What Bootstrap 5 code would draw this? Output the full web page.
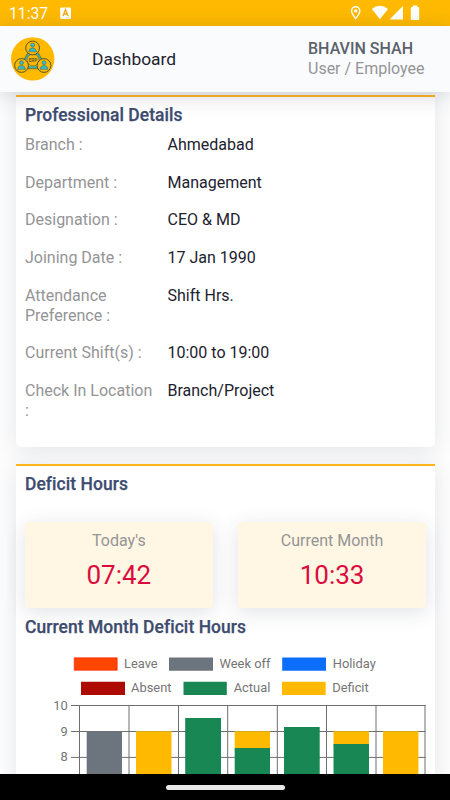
<!DOCTYPE html>
<html lang="en">
<head>
<meta charset="utf-8">
<meta name="viewport" content="width=device-width, initial-scale=1">
<title>Dashboard</title>
<link href="https://cdn.jsdelivr.net/npm/bootstrap@5.3.0/dist/css/bootstrap.min.css" rel="stylesheet">
<style>
body{font-family:Roboto,sans-serif;font-size:16px;line-height:20px;color:#1c222e;background:#fdfdfd;height:800px}
.screen{width:450px;height:800px}
.status{height:26px;background:#ffba00;padding:0 29px 0 9px}
.clock{font-size:15.7px;padding-top:2px;width:50px}
.topbar{height:66px;background:#fafbfd;box-shadow:0 3px 20px rgba(30,35,55,.2);z-index:2}
.logo{margin-left:11px}
.page-title{margin-left:37px;font-size:17.4px;margin-top:-1px}
.user-box{width:142px}
.user-name{color:#5a626b;font-weight:500;font-size:16.05px}
.soft{color:#949496}
.main-area{padding:2.5px 15.5px 0 16px}
.panel{border-radius:0 0 5px 5px;border-top:2px solid #ffb41c;background:#fff;box-shadow:0 3px 22px rgba(50,55,85,.12);padding:0 9px}
.panel-a{height:352px;margin-bottom:17.4px}
.panel-b{height:360px}
.heading{font-size:17.45px;font-weight:500;line-height:20px;color:#3d4b6f;letter-spacing:.07px;-webkit-text-stroke:.25px #3d4b6f;padding-top:8.5px}
.details{padding-top:10px}
.detail-row{margin-bottom:17.65px}
.detail-label{width:142.5px;padding-right:10px}
.tiles{margin-top:28px;gap:25.5px}
.tile{width:187.7px;height:86px;border-radius:4px;background:#fff7e3;box-shadow:0 4px 20px rgba(45,50,80,.14);padding-top:9px}
.tile-value{font-size:26px;line-height:32px;color:#dc0b3e;margin-top:8px}
.month-heading{padding-top:8.5px}
.chart{margin-top:13px}
.bottom-bar{height:26px;background:#000;z-index:3}
.pill{width:119px;height:5px;background:#e9e9e9}
</style>
<script src="https://cdn.jsdelivr.net/npm/bootstrap@5.3.0/dist/js/bootstrap.bundle.min.js"></script>
</head>
<body class="overflow-hidden">
<div class="screen d-flex flex-column overflow-hidden">
  <div class="status d-flex align-items-center text-white flex-shrink-0">
    <span class="clock">11:37</span>
    <svg width="14" height="26" viewBox="59 0 14 26">
      <rect x="60.200" y="7.500" width="10.800" height="11.500" rx="1.200" fill="#fff"/>
      <path d="M63 16l2.500-6.500L68 16M64 14h3.100" fill="none" stroke="#f3aa08" stroke-width="1.300"/>
      <path d="M66 17.700h3.500" stroke="#f9d88c" stroke-width=".7"/>
    </svg>
    <svg class="ms-auto" width="76" height="26" viewBox="345 0 76 26" fill="#fff">
      <path fill-rule="evenodd" d="M355.700 6a4.800 4.800 0 0 0-4.800 4.800c0 3.500 4.800 9 4.800 9s4.800-5.500 4.800-9a4.800 4.800 0 0 0-4.800-4.800zm0 1.400a3.400 3.400 0 0 1 3.400 3.400c0 2-2 5-3.400 6.700-1.400-1.700-3.400-4.700-3.400-6.700a3.400 3.400 0 0 1 3.400-3.400z"/>
      <circle cx="355.700" cy="10.900" r="1.700"/>
      <path d="M371.800 9q8-6.400 16.200 0l-8.100 10.300z"/>
      <path d="M403 6v13.600h-13.500z"/>
      <path d="M412.800 5.500h4.400V7h1q1 0 1 1v11q0 1-1 1h-6.400q-1 0-1-1V8q0-1 1-1h1z"/>
    </svg>
  </div>
  <header class="topbar d-flex align-items-center position-relative flex-shrink-0">
    <svg class="logo" width="44" height="44" viewBox="0 0 44 44">
      <circle cx="21.700" cy="21.900" r="21.700" fill="#ffba00"/>
      <path d="M17.500 17h9l4.200 7.200-4.200 6h-9l-4.200-6z" fill="none" stroke="#35b5b0" stroke-width="2"/>
      <path d="M17 15.500h10l5 8.700-5 7.500H17l-5-7.500z" fill="none" stroke="#3f5145" stroke-width=".7"/>
      <circle cx="22" cy="23" r="6" fill="#f9b900" stroke="#4c5140" stroke-width=".6"/>
      <g fill="#fcb900" stroke="#424933" stroke-width=".9">
        <circle cx="21.600" cy="11" r="6.900"/><circle cx="10.500" cy="28.500" r="6.900"/><circle cx="33" cy="28.500" r="6.900"/>
      </g>
      <g fill="#36bcc6" stroke="#38605a" stroke-width=".5">
        <circle cx="21.600" cy="8.200" r="2"/><path d="M17.700 14.800q.3-3.800 3.900-3.800t3.900 3.800z"/>
        <circle cx="10.500" cy="25.700" r="2"/><path d="M6.600 32.300q.3-3.800 3.900-3.800t3.900 3.800z"/>
        <circle cx="33" cy="25.700" r="2"/><path d="M29.100 32.300q.3-3.800 3.900-3.800t3.900 3.800z"/>
      </g>
      <text x="22" y="24.800" text-anchor="middle" font-size="4.600" font-weight="700" fill="#65542a">ERP</text>
    </svg>
    <span class="page-title">Dashboard</span>
    <div class="user-box ms-auto">
      <div class="user-name">BHAVIN SHAH</div>
      <div class="soft">User / Employee</div>
    </div>
  </header>
  <main class="main-area flex-grow-1 overflow-hidden">
    <section class="panel panel-a">
      <h2 class="heading mb-0">Professional Details</h2>
      <div class="details">
        <div class="detail-row d-flex"><div class="detail-label soft">Branch :</div><div>Ahmedabad</div></div>
        <div class="detail-row d-flex"><div class="detail-label soft">Department :</div><div>Management</div></div>
        <div class="detail-row d-flex"><div class="detail-label soft">Designation :</div><div>CEO &amp; MD</div></div>
        <div class="detail-row d-flex"><div class="detail-label soft">Joining Date :</div><div>17 Jan 1990</div></div>
        <div class="detail-row d-flex"><div class="detail-label soft">Attendance Preference :</div><div>Shift Hrs.</div></div>
        <div class="detail-row d-flex"><div class="detail-label soft">Current Shift(s) :</div><div>10:00 to 19:00</div></div>
        <div class="detail-row d-flex"><div class="detail-label soft">Check In Location :</div><div>Branch/Project</div></div>
      </div>
    </section>
    <section class="panel panel-b">
      <h2 class="heading mb-0">Deficit Hours</h2>
      <div class="tiles d-flex text-center">
        <div class="tile flex-shrink-0"><div class="soft">Today's</div><div class="tile-value">07:42</div></div>
        <div class="tile flex-shrink-0"><div class="soft">Current Month</div><div class="tile-value">10:33</div></div>
      </div>
      <h2 class="heading month-heading mb-0">Current Month Deficit Hours</h2>
      <svg class="chart d-block" width="402" height="140" viewBox="25 650 402 140" font-size="12.900" fill="#757575">
        <g>
          <path fill="#ff4500" stroke="#ff1a00" stroke-width=".6" d="M74.200 657.800h43v12.500h-43z"/>
          <path fill="#6c757d" d="M169 657.500h44v13.200h-44z"/>
          <path fill="#0d6efd" d="M282.200 657.500H326v13.200h-43.800z"/>
          <path fill="#ad0b00" d="M81 681.700h44v13.200H81z"/>
          <path fill="#198754" d="M183.500 681.700h43.300v13.200h-43.300z"/>
          <path fill="#ffba00" d="M282 681.700h43.700v13.200H282z"/>
          <text x="124" y="668.300">Leave</text><text x="219.500" y="668.300">Week off</text><text x="332.700" y="668.300">Holiday</text>
          <text x="131" y="692.300">Absent</text><text x="233.700" y="692.300">Actual</text><text x="332.200" y="692.300">Deficit</text>
        </g>
        <g text-anchor="end"><text x="67.700" y="710">10</text><text x="67.700" y="735.700">9</text><text x="67.700" y="761">8</text></g>
        <path d="M71 705.500h354.500M71 731.500h354.500M71 757.400h354.500M79.500 705v80M129 705v80M178.500 705v80M227.700 705v80M277.300 705v80M326.500 705v80M376 705v80M425 705v80" fill="none" stroke="#6e6e6e"/>
        <path fill="#6c757d" d="M86.700 731.300h35.300v60H86.700z"/>
        <path fill="#ffba00" d="M136 731.300h35.500v60H136zM234.700 731.300H270v20h-35.300zM333.500 731.300H369v15h-35.500zM383 731.300h35.400v60H383z"/>
        <path fill="#198754" d="M185.200 718H221v70h-35.800zM234.700 748H270v40h-35.300zM284 727h35.700v60H284zM333.500 744H369v45h-35.500z"/>
      </svg>
    </section>
  </main>
  <footer class="bottom-bar d-flex align-items-center justify-content-center flex-shrink-0 position-relative"><div class="pill rounded-pill"></div></footer>
</div>
</body>
</html>
